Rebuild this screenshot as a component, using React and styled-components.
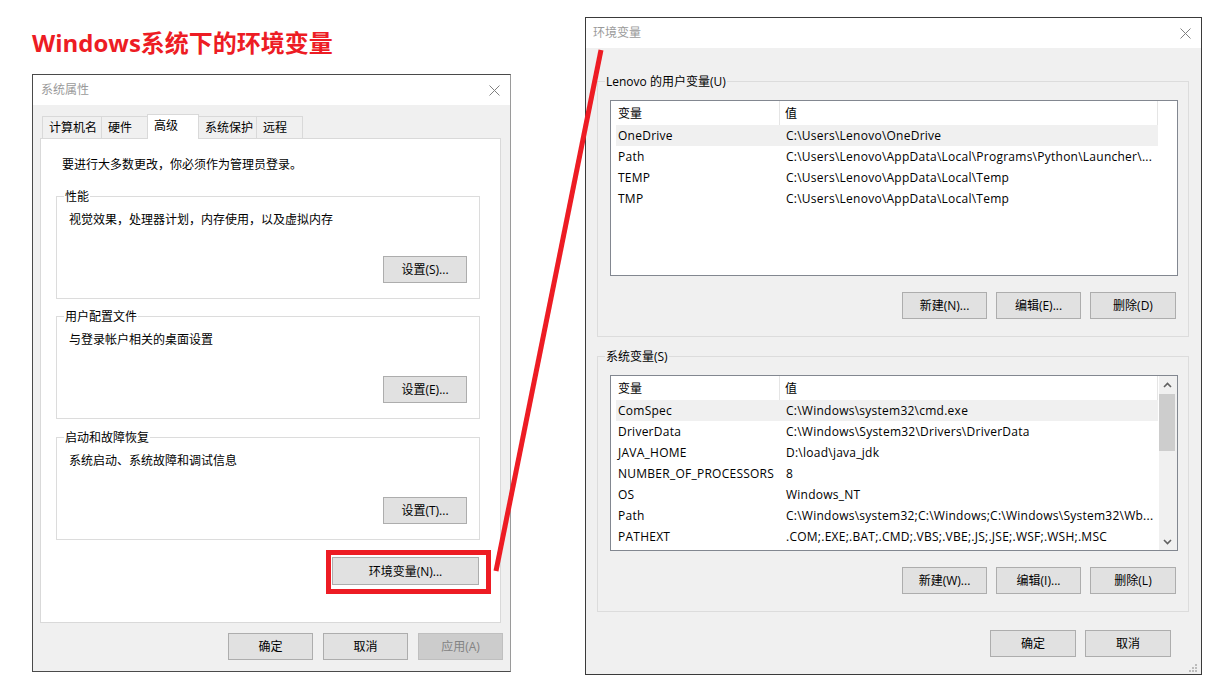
import React from 'react'
import styled, { createGlobalStyle } from 'styled-components'

const GlobalStyle = createGlobalStyle`
  *, *::before, *::after {
    box-sizing: border-box;
  }
  body {
    margin: 0;
    background: #fff;
    font-family: "Open Sans", "Noto Sans CJK SC", sans-serif;
    font-size: 12px;
    color: #000;
  }
`

const Page = styled.div`
  position: relative;
  width: 1214px;
  height: 691px;
  display: flex;
  align-items: flex-start;
  padding-left: 32px;
  overflow: hidden;
`

const LeftColumn = styled.div`
  width: 479px;
  display: flex;
  flex-direction: column;
`

const Heading = styled.h1`
  margin: 0 0 15px;
  padding-top: 27px;
  font-family: "Open Sans", "Noto Sans CJK SC", sans-serif;
  font-size: 24px;
  font-weight: 700;
  line-height: 32px;
  color: #ed1c24;
  white-space: nowrap;
`

const Window = styled.div`
  position: relative;
  display: flex;
  flex-direction: column;
  width: ${p => p.$w}px;
  height: ${p => p.$h}px;
  margin-top: ${p => p.$top || 0}px;
  margin-left: ${p => p.$left || 0}px;
  background: #f0f0f0;
  border: 1px solid;
  border-color: ${p => p.$border};
`

const TitleBar = styled.div`
  flex-shrink: 0;
  height: 30px;
  display: flex;
  align-items: center;
  justify-content: space-between;
  padding: 0 10px 0 ${p => p.$pad}px;
  background: #fff;
  color: #9a9a9a;
  line-height: 16px;
`

const Body = styled.div`
  display: flex;
  flex-direction: column;
  padding: ${p => p.$pad};
`

const TabStrip = styled.div`
  position: relative;
  z-index: 1;
  display: flex;
  align-items: flex-end;
  height: 25px;
  margin-bottom: -1px;
  padding-left: 2px;
`

const Tab = styled.div`
  position: relative;
  z-index: ${p => (p.$active ? 2 : 1)};
  width: ${p => p.$w}px;
  height: ${p => (p.$active ? 25 : 22)}px;
  margin-bottom: ${p => (p.$active ? 0 : 1)}px;
  margin-left: -1px;
  padding: 0 0 ${p => (p.$active ? 2 : 0)}px 6px;
  display: flex;
  align-items: center;
  background: ${p => (p.$active ? '#fff' : '#f0f0f0')};
  border: 1px solid #d9d9d9;
  border-bottom: none;
  line-height: 16px;
  white-space: nowrap;

  &:first-child {
    margin-left: 0;
  }
`

const Panel = styled.div`
  height: 485px;
  display: flex;
  flex-direction: column;
  padding: 18px 20px 0 15px;
  background: #fff;
  border: 1px solid #d9d9d9;
`

const Intro = styled.div`
  margin-left: 6px;
  line-height: 16px;
`

const Group = styled.div`
  position: relative;
  display: flex;
  flex-direction: column;
  margin-top: ${p => p.$mt || 0}px;
  padding: ${p => p.$pad};
  border: 1px solid #dcdcdc;
`

const Legend = styled.span`
  position: absolute;
  top: -8px;
  left: 7px;
  padding: 0 1px;
  line-height: 16px;
  background: ${p => p.$bg};
  white-space: nowrap;
`

const GroupText = styled.div`
  line-height: 16px;
`

const Button = styled.button`
  flex-shrink: 0;
  width: ${p => p.$w || 85}px;
  height: ${p => p.$h || 27}px;
  padding: 1px 0 0;
  font: inherit;
  line-height: 16px;
  color: ${p => (p.disabled ? '#838383' : '#000')};
  background: ${p => (p.disabled ? '#cccccc' : '#e1e1e1')};
  border: 1px solid ${p => (p.disabled ? '#bfbfbf' : '#adadad')};
  border-radius: 0;
  white-space: nowrap;
`

const SettingsButton = styled(Button)`
  align-self: flex-end;
  margin-top: 28px;
`

const EnvWrap = styled.div`
  position: relative;
  align-self: flex-end;
  margin: 17px 1px 0 0;
  display: flex;
`

const Highlight = styled.span`
  position: absolute;
  top: -7px;
  left: -6px;
  right: -12px;
  bottom: -9px;
  border: 5px solid #ed1c24;
  pointer-events: none;
`

const ButtonRow = styled.div`
  display: flex;
  justify-content: flex-end;
  gap: ${p => p.$gap || 9}px;
  margin-top: ${p => p.$mt || 0}px;
  margin-right: ${p => p.$mr || 0}px;
  padding-right: ${p => p.$pr || 0}px;
`

const ListView = styled.div`
  height: 176px;
  display: flex;
  padding-left: 5px;
  background: #fff;
  border: 1px solid #828790;
  overflow: hidden;
`

const ListTable = styled.div`
  width: 542px;
  display: flex;
  flex-direction: column;
`

const Header = styled.div`
  flex-shrink: 0;
  display: flex;
  height: 24px;
  border-right: 1px solid #e5e5e5;
`

const HeaderCell = styled.div`
  display: flex;
  align-items: center;
  ${p => (p.$w ? `width: ${p.$w}px; border-right: 1px solid #e5e5e5;` : 'flex: 1;')}
  padding-left: ${p => p.$pl}px;
  padding-top: 1px;
  line-height: 16px;
`

const Row = styled.div`
  flex-shrink: 0;
  display: flex;
  align-items: center;
  height: 21px;
  padding-top: 1px;
  background: ${p => (p.$selected ? '#f0f0f0' : 'transparent')};
`

const Cell = styled.div`
  ${p => (p.$w ? `width: ${p.$w}px;` : 'flex: 1;')}
  padding-left: ${p => p.$pl}px;
  line-height: 16px;
  letter-spacing: 0.25px;
  white-space: nowrap;
  overflow: hidden;
`

const Scrollbar = styled.div`
  width: 18px;
  margin-left: auto;
  display: flex;
  flex-direction: column;
  background: #f0f0f0;
`

const ScrollArrow = styled.div`
  height: 17px;
  display: flex;
  align-items: center;
  justify-content: center;
  padding-right: 2px;
  ${p => (p.$bottom ? 'margin-top: auto;' : '')}
`

const Thumb = styled.div`
  height: 57px;
  margin: 1px 2px 0 0;
  background: #cdcdcd;
`

const Grip = styled.svg`
  position: absolute;
  right: 3px;
  bottom: 1px;
`

const Connector = styled.svg`
  position: absolute;
  top: 0;
  left: 0;
  pointer-events: none;
  z-index: 5;
`

const CloseIcon = () => (
  <svg width="11" height="11" viewBox="0 0 11 11">
    <path d="M0.5 0.5L10.5 10.5M10.5 0.5L0.5 10.5" stroke="#808080" strokeWidth="1" fill="none" />
  </svg>
)

const Chevron = ({ down }) => (
  <svg width="9" height="6" viewBox="0 0 9 6">
    <polyline
      points={down ? '1,1 4.5,4.5 8,1' : '1,5 4.5,1.5 8,5'}
      stroke="#606060"
      strokeWidth="1.6"
      fill="none"
    />
  </svg>
)

const tabs = [
  { label: '计算机名', w: 60 },
  { label: '硬件', w: 47 },
  { label: '高级', w: 52, active: true },
  { label: '系统保护', w: 59 },
  { label: '远程', w: 47 },
]

const groups = [
  { title: '性能', text: '视觉效果，处理器计划，内存使用，以及虚拟内存', button: '设置(S)...', mt: 23 },
  { title: '用户配置文件', text: '与登录帐户相关的桌面设置', button: '设置(E)...', mt: 17 },
  { title: '启动和故障恢复', text: '系统启动、系统故障和调试信息', button: '设置(T)...', mt: 18 },
]

const userVars = [
  ['OneDrive', 'C:\\Users\\Lenovo\\OneDrive'],
  ['Path', 'C:\\Users\\Lenovo\\AppData\\Local\\Programs\\Python\\Launcher\\...'],
  ['TEMP', 'C:\\Users\\Lenovo\\AppData\\Local\\Temp'],
  ['TMP', 'C:\\Users\\Lenovo\\AppData\\Local\\Temp'],
]

const systemVars = [
  ['ComSpec', 'C:\\Windows\\system32\\cmd.exe'],
  ['DriverData', 'C:\\Windows\\System32\\Drivers\\DriverData'],
  ['JAVA_HOME', 'D:\\load\\java_jdk'],
  ['NUMBER_OF_PROCESSORS', '8'],
  ['OS', 'Windows_NT'],
  ['Path', 'C:\\Windows\\system32;C:\\Windows;C:\\Windows\\System32\\Wb...'],
  ['PATHEXT', '.COM;.EXE;.BAT;.CMD;.VBS;.VBE;.JS;.JSE;.WSF;.WSH;.MSC'],
]

const VarList = ({ rows, scroll }) => (
  <ListView>
    <ListTable>
      <Header>
        <HeaderCell $w={164} $pl={2}>变量</HeaderCell>
        <HeaderCell $pl={5}>值</HeaderCell>
      </Header>
      {rows.map(([name, value], i) => (
        <Row key={name + i} $selected={i === 0}>
          <Cell $w={164} $pl={2}>{name}</Cell>
          <Cell $pl={6}>{value}</Cell>
        </Row>
      ))}
    </ListTable>
    {scroll && (
      <Scrollbar>
        <ScrollArrow><Chevron /></ScrollArrow>
        <Thumb />
        <ScrollArrow $bottom><Chevron down /></ScrollArrow>
      </Scrollbar>
    )}
  </ListView>
)

const VarGroup = ({ title, rows, scroll, keys, mt }) => (
  <Group $mt={mt} $pad="18px 10px 17px 12px">
    <Legend $bg="#f0f0f0">{title}</Legend>
    <VarList rows={rows} scroll={scroll} />
    <ButtonRow $mt={16} $pr={2}>
      <Button>新建({keys[0]})...</Button>
      <Button>编辑({keys[1]})...</Button>
      <Button $w={86}>删除({keys[2]})</Button>
    </ButtonRow>
  </Group>
)

const SystemProperties = () => (
  <Window $w={479} $h={598} $border="#4a4a4a #9a9a9a #4a4a4a #4a4a4a">
    <TitleBar $pad={8}>
      <span>系统属性</span>
      <CloseIcon />
    </TitleBar>
    <Body $pad="9px 9px 0 7px">
      <TabStrip>
        {tabs.map(t => (
          <Tab key={t.label} $w={t.w} $active={t.active}>{t.label}</Tab>
        ))}
      </TabStrip>
      <Panel>
        <Intro>要进行大多数更改，你必须作为管理员登录。</Intro>
        {groups.map(g => (
          <Group key={g.title} $mt={g.mt} $pad="15px 12px 15px 12px">
            <Legend $bg="#fff">{g.title}</Legend>
            <GroupText>{g.text}</GroupText>
            <SettingsButton $w={84}>{g.button}</SettingsButton>
          </Group>
        ))}
        <EnvWrap>
          <Button $w={147} $h={28}>环境变量(N)...</Button>
          <Highlight />
        </EnvWrap>
      </Panel>
      <ButtonRow $mt={10} $gap={10} $mr={-2}>
        <Button>确定</Button>
        <Button>取消</Button>
        <Button disabled>应用(A)</Button>
      </ButtonRow>
    </Body>
  </Window>
)

const EnvironmentVariables = () => (
  <Window $w={617} $h={658} $top={17} $left={74} $border="#3a3a3a">
    <TitleBar $pad={7}>
      <span>环境变量</span>
      <CloseIcon />
    </TitleBar>
    <Body $pad="33px 12px 0 11px">
      <VarGroup title="Lenovo 的用户变量(U)" rows={userVars} keys={['N', 'E', 'D']} />
      <VarGroup title="系统变量(S)" rows={systemVars} scroll keys={['W', 'I', 'L']} mt={19} />
      <ButtonRow $mt={18} $pr={18}>
        <Button $w={86}>确定</Button>
        <Button $w={86}>取消</Button>
      </ButtonRow>
    </Body>
    <Grip width="9" height="9" viewBox="0 0 9 9">
      {[[6, 0], [3, 3], [6, 3], [0, 6], [3, 6], [6, 6]].map(([x, y]) => (
        <rect key={x + '-' + y} x={x} y={y} width="2" height="2" fill="#bcbcbc" />
      ))}
    </Grip>
  </Window>
)

export default function App() {
  return (
    <Page>
      <GlobalStyle />
      <LeftColumn>
        <Heading>Windows系统下的环境变量</Heading>
        <SystemProperties />
      </LeftColumn>
      <EnvironmentVariables />
      <Connector width="1214" height="691" viewBox="0 0 1214 691">
        <line x1="496" y1="571" x2="601" y2="50" stroke="#ed1c24" strokeWidth="5" />
      </Connector>
    </Page>
  )
}
